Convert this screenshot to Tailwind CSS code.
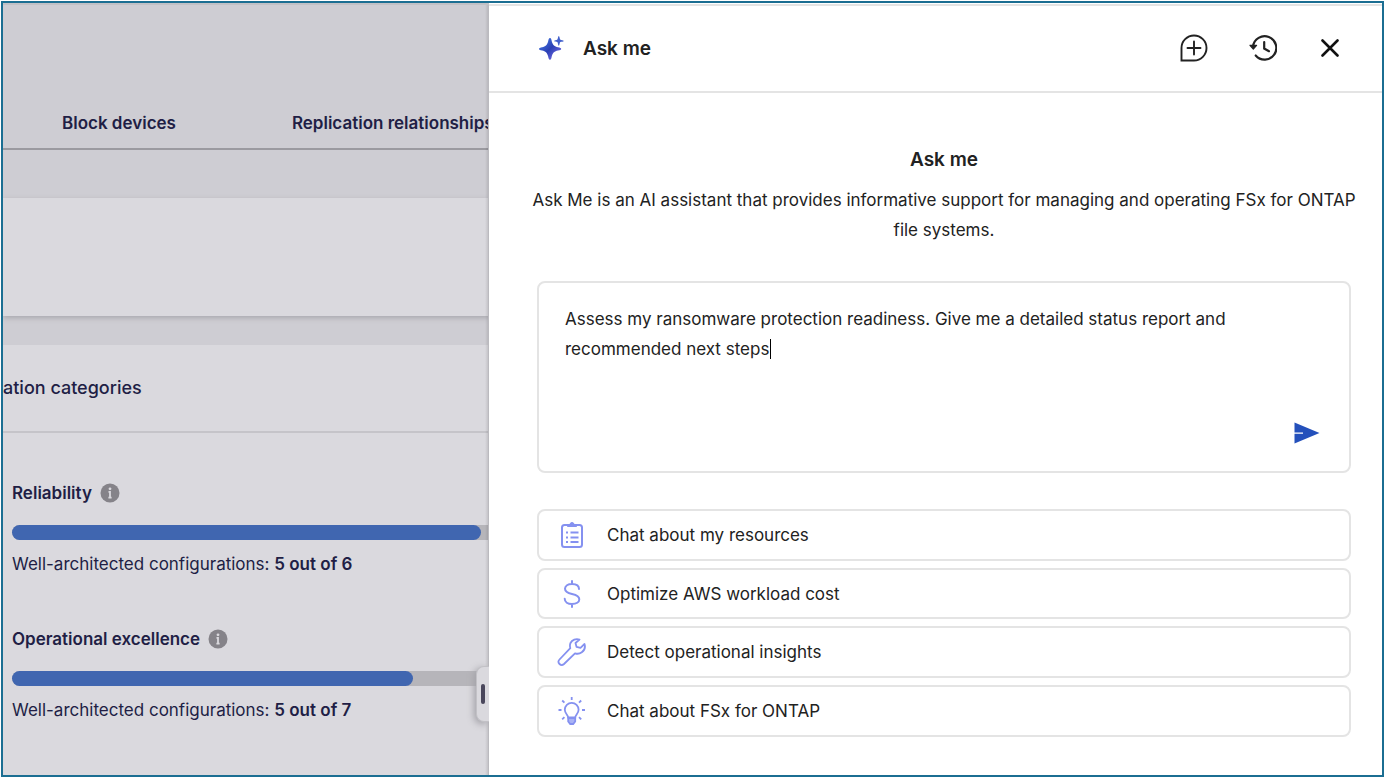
<!DOCTYPE html>
<html lang="en">
<head>
<meta charset="utf-8">
<meta name="viewport" content="width=device-width, initial-scale=1">
<title>Ask me</title>
<script src="https://cdn.jsdelivr.net/npm/@tailwindcss/browser@4"></script>
</head>
<body class="min-h-screen bg-white p-px font-['Inter',sans-serif] text-[17px] leading-[30px]">
<div class="grid min-h-[calc(100vh-2px)] grid-cols-[486fr_893fr] overflow-hidden border-2 border-[#1b6e92]">

  <!-- Dimmed dashboard behind the panel -->
  <main class="relative flex min-w-0 flex-col overflow-hidden border-t-2 border-[#c2c1c6] bg-[#cecdd3] text-[#211e45]">
    <nav class="flex h-[145px] items-end gap-[116px] overflow-hidden border-b-2 border-[#9b9aa0] pb-2.5 pl-[59px] font-semibold whitespace-nowrap" aria-label="Resources">
      <a href="#block">Block devices</a>
      <a href="#replication">Replication relationships</a>
    </nav>
    <section class="mt-12 h-[118px] bg-[#dad9de] shadow-[0_2px_5px_#a9a8ae]"></section>
    <section class="mt-[29px] flex-1 bg-[#dad9de]">
      <h2 class="h-[88px] border-b-2 border-[#c5c4c9] pt-7 text-[18px] font-medium">ation categories</h2>
      <div class="pt-[45px] pl-[9px]">
        <div class="flex items-center gap-2">
          <h3 class="font-semibold">Reliability</h3>
          <svg class="size-5" viewBox="0 0 20 20" aria-hidden="true"><circle cx="10" cy="10" r="9.5" fill="#858389"/><circle cx="10" cy="5.800" r="1.400" fill="#dad9de"/><path d="M8.500 8.800H10v5.800M8.400 14.600h3.200" fill="none" stroke="#dad9de" stroke-width="1.800"/></svg>
        </div>
        <div class="mt-[17px] h-[15px] rounded-l-full bg-[#b6b5ba]"><div class="h-full rounded-full bg-[#4066b0]" style="width:98.3%"></div></div>
        <p class="mt-[9px] whitespace-nowrap">Well-architected configurations: <span class="font-semibold">5 out of 6</span></p>
      </div>
      <div class="pt-[45px] pl-[9px]">
        <div class="flex items-center gap-2">
          <h3 class="font-semibold">Operational excellence</h3>
          <svg class="size-5" viewBox="0 0 20 20" aria-hidden="true"><circle cx="10" cy="10" r="9.5" fill="#858389"/><circle cx="10" cy="5.800" r="1.400" fill="#dad9de"/><path d="M8.500 8.800H10v5.800M8.400 14.600h3.200" fill="none" stroke="#dad9de" stroke-width="1.800"/></svg>
        </div>
        <div class="mt-[17px] h-[15px] rounded-l-full bg-[#b6b5ba]"><div class="h-full rounded-full bg-[#4066b0]" style="width:84.1%"></div></div>
        <p class="mt-[9px] whitespace-nowrap">Well-architected configurations: <span class="font-semibold">5 out of 7</span></p>
      </div>
    </section>
    <div class="pointer-events-none absolute inset-y-0 right-0 w-1 border-r border-[#bbbabf] bg-linear-to-r from-transparent to-black/10"></div>
    <button class="absolute right-0 bottom-[53px] flex h-14 w-[13px] items-center justify-center rounded-l-lg border border-r-0 border-[#c2c1c6] bg-[#dad9de] shadow-[-2px_2px_7px_#a3a2a8]" aria-label="Resize panel"><span class="h-5 w-1 rounded-full bg-[#4a475c]"></span></button>
  </main>

  <!-- Assistant panel -->
  <aside class="flex min-w-0 flex-col bg-white pt-px text-[#222]">
    <header class="flex h-[89px] items-center border-y-2 border-[#e4e4e4] pr-[43px] pb-0.5 pl-[50px]">
      <svg class="h-6 w-[25px]" viewBox="0 0 25 24" aria-hidden="true">
        <defs><linearGradient id="spark" x1="0" y1="0" x2="1" y2="1"><stop offset="0" stop-color="#4a86ee"/><stop offset=".5" stop-color="#2b3fb4"/><stop offset="1" stop-color="#8a78f4"/></linearGradient></defs>
        <path d="M11 2c1.200 0 1.300 1.500 1.800 3.500 1 3.700 2.700 5 6.200 5.800 2 .5 3.200.7 3.200 1.600s-1.200 1.100-3.200 1.600c-3.500.9-5.200 2.200-6.200 5.700-.5 2-.6 3.500-1.800 3.500s-1.400-1.500-1.900-3.500c-1-3.500-2.600-4.800-6-5.700-1.800-.5-3.100-.7-3.100-1.600s1.300-1.100 3.100-1.600c3.400-.8 5-2.100 6-5.800C9.600 3.500 9.800 2 11 2Z" fill="url(#spark)"/>
        <path d="M19.800 0c.8 0 .7 3 1.600 3.700.7.600 3.300.4 3.300 1.200s-2.600.6-3.300 1.200c-.9.700-.8 3.700-1.600 3.700s-.7-3-1.600-3.700c-.7-.6-3-.4-3-1.200s2.300-.6 3-1.200C19.100 3 19 0 19.800 0Z" fill="#4260cc"/>
      </svg>
      <h1 class="ml-[19px] pt-0.5 text-[19px] font-semibold">Ask me</h1>
      <div class="ml-auto flex items-center gap-[41px]">
        <button aria-label="New chat"><svg class="size-7" viewBox="0 0 28 28" fill="none" stroke="#222" stroke-width="1.900" aria-hidden="true"><path d="M1.500 26.500V14A12.500 12.500 0 1 1 14 26.500Z"/><path d="M14 7.500v13M7.500 14h13" stroke-linecap="round"/></svg></button>
        <button aria-label="History"><svg class="size-7" viewBox="0 0 28 28" fill="none" stroke="#222" stroke-width="2.200" aria-hidden="true"><path d="M4 12.500A11.700 11.700 0 1 1 6.700 21.500" stroke-linecap="round"/><path d="M1 11.300h6.600L4.300 15Z" fill="#222" stroke-width="1.200" stroke-linejoin="round"/><path d="M15.200 8v6.500l4.800 2.700" stroke-linecap="round"/></svg></button>
        <button aria-label="Close" class="ml-[3px]"><svg class="size-[18px]" viewBox="0 0 18 18" fill="none" stroke="#111" stroke-width="2.600" stroke-linecap="round" aria-hidden="true"><path d="m1.500 1.500 15 15M16.500 1.500l-15 15"/></svg></button>
      </div>
    </header>

    <div class="flex flex-1 flex-col pt-[52px] pr-[31px] pb-9 pl-12">
      <h2 class="text-center text-[19px] font-semibold">Ask me</h2>
      <p class="-mx-3 mt-2.5 text-center">Ask Me is an AI assistant that provides informative support for managing and operating FSx for ONTAP file systems.</p>

      <form class="relative mt-9 flex">
        <label for="prompt" class="sr-only">Your question</label>
        <textarea id="prompt" spellcheck="false" class="h-48 w-full resize-none overflow-hidden rounded-lg border-2 border-[#e4e4e4] pt-[21px] pr-20 pl-[26px] outline-none">Assess my ransomware protection readiness. Give me a detailed status report and recommended next steps</textarea>
        <span class="absolute top-[58px] left-[233px] h-5 w-px bg-black"></span>
        <button type="submit" aria-label="Send" class="absolute right-[31px] bottom-[29px]"><svg class="h-[22px] w-[26px]" viewBox="0 0 26 22" aria-hidden="true"><path d="M.5.500 25.500 11 .5 21.500v-9.700h8.500v-1.400H.5Z" fill="#2450bb"/></svg></button>
      </form>

      <div class="mt-9 flex flex-col gap-[7px]">
        <button class="flex h-[52px] items-center gap-5 rounded-lg border-2 border-[#e4e4e4] pl-[18px] text-left">
          <svg class="size-[30px]" viewBox="0 0 30 30" fill="none" stroke="#8591f0" stroke-width="2" aria-hidden="true"><rect x="5" y="5" width="20" height="22" rx="2.500"/><path d="M10.500 6.500h9V4.500h-2.500a2 2 0 0 0-4 0h-2.500Z" fill="#8591f0" stroke-width="1"/><path d="M9 12.500h2M13.500 12.500h8M9 17.500h2M13.500 17.500h8M9 22h2M13.500 22h8"/></svg>
          <span>Chat about my resources</span>
        </button>
        <button class="flex h-[51px] items-center gap-5 rounded-lg border-2 border-[#e4e4e4] pl-[18px] text-left">
          <svg class="size-[30px]" viewBox="0 0 30 30" fill="none" stroke="#8591f0" stroke-width="2" stroke-linecap="round" aria-hidden="true"><path d="M15 2v3M15 25v3M22 10c0-3.200-3-5-7-5s-7 1.900-7 4.800c0 3 2.600 4.200 7 5.200s7.300 2.200 7.300 5.200S19.200 25 15 25s-7.300-2-7.300-5.200"/></svg>
          <span>Optimize AWS workload cost</span>
        </button>
        <button class="flex h-[52px] items-center gap-5 rounded-lg border-2 border-[#e4e4e4] pl-[18px] text-left">
          <svg class="size-[30px]" viewBox="0 0 30 30" fill="none" stroke="#8591f0" stroke-width="1.800" stroke-linejoin="round" aria-hidden="true"><path d="M22.500 2.500c-3.500-1.300-7.500.3-9 3.500-.8 1.800-.6 3.700-.2 5.200L2.500 22.500c-1.400 1.500-1.200 3.300 0 4.500s3.200 1.200 4.500 0L18 16.300c2 .7 4.700.5 6.800-1.100 2.700-2 3.700-5.200 2.700-8.200l-4 3.800-4-1-1-3.800Z"/></svg>
          <span>Detect operational insights</span>
        </button>
        <button class="flex h-[52px] items-center gap-5 rounded-lg border-2 border-[#e4e4e4] pl-[18px] text-left">
          <svg class="size-[30px]" viewBox="0 0 30 30" fill="none" stroke="#8591f0" stroke-width="1.800" aria-hidden="true"><path d="M11.200 21.500c0-2.500-3.400-4-3.400-7.700a6.900 6.900 0 0 1 13.800 0c0 3.700-3.400 5.200-3.400 7.700Z"/><path d="M11.200 22h7v3.500l-2 2.500h-3l-2-2.500Z" fill="#a9b2f5"/><path d="M14.700 1v3M1.500 14h3M25 14h3M5.200 4.500l2.200 2.200M24.200 4.500 22 6.700M5.200 23.300l2.200-2.200M24.200 23.300 22 21.100"/></svg>
          <span>Chat about FSx for ONTAP</span>
        </button>
      </div>
    </div>
  </aside>
</div>
</body>
</html>
